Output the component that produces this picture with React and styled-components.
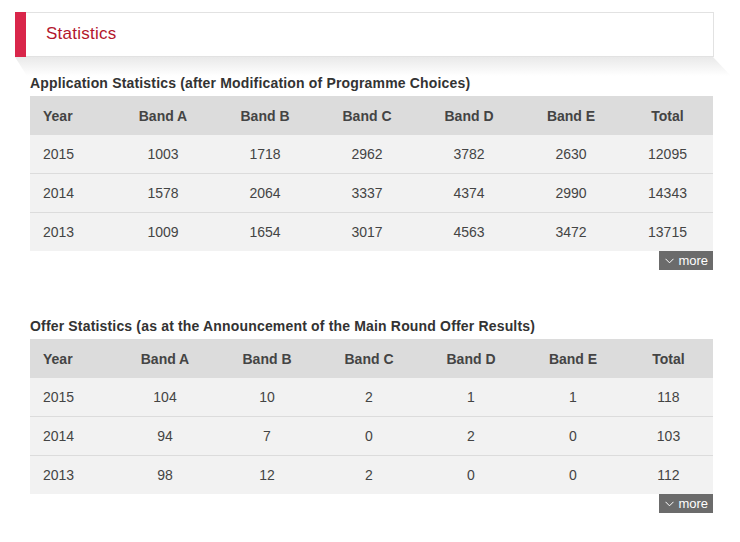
import styled, { createGlobalStyle } from 'styled-components';

const GlobalStyle = createGlobalStyle`
  body {
    margin: 0;
    background: #fff;
    font-family: "Liberation Sans", Arial, sans-serif;
    color: #444;
  }
`;

const Page = styled.div`
  padding: 12px 0 0 15px;
  width: 699px;
`;

const TitleBar = styled.div`
  position: relative;
  display: flex;
  align-items: center;
  height: 43px;
  border: 1px solid #e2e2e2;
  border-left: none;
  background: #fff;

  &::before {
    content: '';
    width: 11px;
    align-self: stretch;
    margin-top: -1px;
    margin-bottom: -1px;
    background: #d9264a;
  }

  &::after {
    content: '';
    position: absolute;
    left: 0;
    top: 100%;
    margin-top: 1px;
    width: calc(100% + 18px);
    height: 19px;
    clip-path: polygon(0 0, calc(100% - 18px) 0, 100% 100%, 12px 100%);
    background: linear-gradient(#e9e9e9, rgba(255, 255, 255, 0));
    z-index: -1;
  }
`;

const Title = styled.h1`
  margin: -2px 0 0 20px;
  font-size: 17px;
  font-weight: normal;
  color: #b3162c;
  letter-spacing: 0.25px;
`;

const Section = styled.section`
  margin-left: 15px;
  width: 683px;
  margin-top: ${p => p.$top}px;
`;

const SectionTitle = styled.h2`
  margin: 0 0 4px;
  font-size: 14px;
  line-height: 18px;
  font-weight: bold;
  color: #333;
  letter-spacing: 0.17px;
`;

const Table = styled.table`
  width: 100%;
  border-collapse: collapse;
  table-layout: fixed;
  font-size: 14px;
`;

const Th = styled.th`
  height: 39px;
  padding: 0;
  background: #dcdcdc;
  font-weight: bold;
  color: #444;
  text-align: ${p => (p.$left ? 'left' : 'center')};
  padding-left: ${p => (p.$left ? '13px' : '0')};
`;

const Row = styled.tr`
  background: #f2f2f2;
  & + & td {
    border-top: 1px solid #dcdcdc;
  }
`;

const Td = styled.td`
  height: 38px;
  padding: 0;
  color: #444;
  text-align: ${p => (p.$left ? 'left' : 'center')};
  padding-left: ${p => (p.$left ? '13px' : '0')};
`;

const MoreRow = styled.div`
  display: flex;
  justify-content: flex-end;
`;

const MoreButton = styled.button`
  display: flex;
  align-items: center;
  gap: 4px;
  height: 19px;
  padding: 0 5px 0 6px;
  border: none;
  background: #6b6b6b;
  color: #fff;
  font-family: "Liberation Sans", Arial, sans-serif;
  font-size: 13px;
  cursor: pointer;

  svg {
    width: 9px;
    height: 6px;
  }
`;

const headers = ['Year', 'Band A', 'Band B', 'Band C', 'Band D', 'Band E', 'Total'];

const applications = [
  ['2015', '1003', '1718', '2962', '3782', '2630', '12095'],
  ['2014', '1578', '2064', '3337', '4374', '2990', '14343'],
  ['2013', '1009', '1654', '3017', '4563', '3472', '13715'],
];

const offers = [
  ['2015', '104', '10', '2', '1', '1', '118'],
  ['2014', '94', '7', '0', '2', '0', '103'],
  ['2013', '98', '12', '2', '0', '0', '112'],
];

function StatsTable({ title, rows, yearWidth, top }) {
  const bandWidth = 102;
  return (
    <Section $top={top}>
      <SectionTitle>{title}</SectionTitle>
      <Table>
        <colgroup>
          <col style={{ width: yearWidth }} />
          {[0, 1, 2, 3, 4].map(i => <col key={i} style={{ width: bandWidth }} />)}
          <col />
        </colgroup>
        <thead>
          <tr>
            {headers.map((h, i) => <Th key={h} $left={i === 0}>{h}</Th>)}
          </tr>
        </thead>
        <tbody>
          {rows.map(r => (
            <Row key={r[0]}>
              {r.map((c, i) => <Td key={i} $left={i === 0}>{c}</Td>)}
            </Row>
          ))}
        </tbody>
      </Table>
      <MoreRow>
        <MoreButton>
          <svg viewBox="0 0 9 6" fill="none" stroke="#fff" strokeWidth="1">
            <path d="M0.5 0.8 L4.5 4.8 L8.5 0.8" />
          </svg>
          more
        </MoreButton>
      </MoreRow>
    </Section>
  );
}

export default function App() {
  return (
    <>
      <GlobalStyle />
      <Page>
        <TitleBar>
          <Title>Statistics</Title>
        </TitleBar>
        <StatsTable
          top={17}
          yearWidth={82}
          title="Application Statistics (after Modification of Programme Choices)"
          rows={applications}
        />
        <StatsTable
          top={47}
          yearWidth={84}
          title="Offer Statistics (as at the Announcement of the Main Round Offer Results)"
          rows={offers}
        />
      </Page>
    </>
  );
}
